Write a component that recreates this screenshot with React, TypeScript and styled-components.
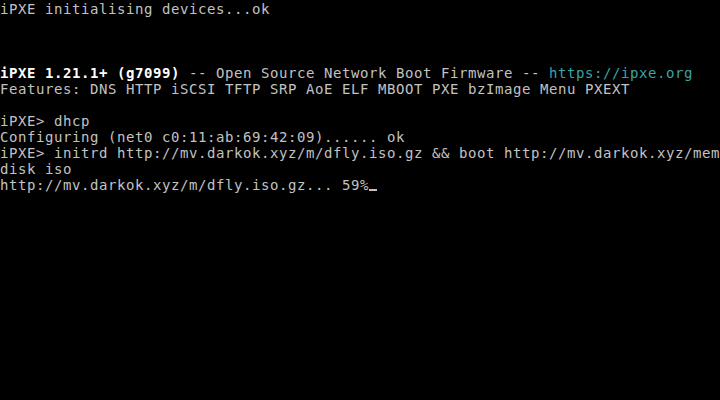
import React from "react";
import styled, { createGlobalStyle } from "styled-components";

const Global = createGlobalStyle`
  html, body { margin: 0; padding: 0; background: #000; }
  body { width: 720px; height: 400px; overflow: hidden; }
`;

const Screen = styled.div`
  width: 720px;
  height: 400px;
  box-sizing: border-box;
  padding-top: 1px;
  background: #000;
  display: flex;
  flex-direction: column;
  font-family: "DejaVu Sans Mono", "Liberation Mono", monospace;
  font-size: 14px;
  letter-spacing: 0.57px;
  line-height: 16px;
  color: #c2c2c2;
`;

const Row = styled.div`
  height: 16px;
  white-space: pre;
  display: flex;
  align-items: center;
`;

const Text = styled.span<{ $tone?: "bright" | "cyan" }>`
  color: ${(p) =>
    p.$tone === "bright" ? "#ffffff" : p.$tone === "cyan" ? "#3aa5a5" : "#c2c2c2"};
  font-weight: ${(p) => (p.$tone === "bright" ? 700 : 400)};
  letter-spacing: ${(p) => (p.$tone === "bright" ? "0.57px" : "inherit")};
`;

const Cursor = styled.span`
  display: inline-block;
  width: 9px;
  height: 16px;
  position: relative;
  &::after {
    content: "";
    position: absolute;
    left: 0;
    right: 1px;
    bottom: 2px;
    height: 2px;
    background: #c2c2c2;
  }
`;

export default function App() {
  return (
    <>
      <Global />
      <Screen>
        <Row><Text>iPXE initialising devices...ok</Text></Row>
        <Row />
        <Row />
        <Row />
        <Row>
          <Text $tone="bright">iPXE 1.21.1+ (g7099)</Text>
          <Text> -- Open Source Network Boot Firmware -- </Text>
          <Text $tone="cyan">https://ipxe.org</Text>
        </Row>
        <Row><Text>Features: DNS HTTP iSCSI TFTP SRP AoE ELF MBOOT PXE bzImage Menu PXEXT</Text></Row>
        <Row />
        <Row><Text>iPXE&gt; dhcp</Text></Row>
        <Row><Text>Configuring (net0 c0:11:ab:69:42:09)...... ok</Text></Row>
        <Row><Text>iPXE&gt; initrd http://mv.darkok.xyz/m/dfly.iso.gz &amp;&amp; boot http://mv.darkok.xyz/mem</Text></Row>
        <Row><Text>disk iso</Text></Row>
        <Row>
          <Text>http://mv.darkok.xyz/m/dfly.iso.gz... 59%</Text>
          <Cursor />
        </Row>
      </Screen>
    </>
  );
}
